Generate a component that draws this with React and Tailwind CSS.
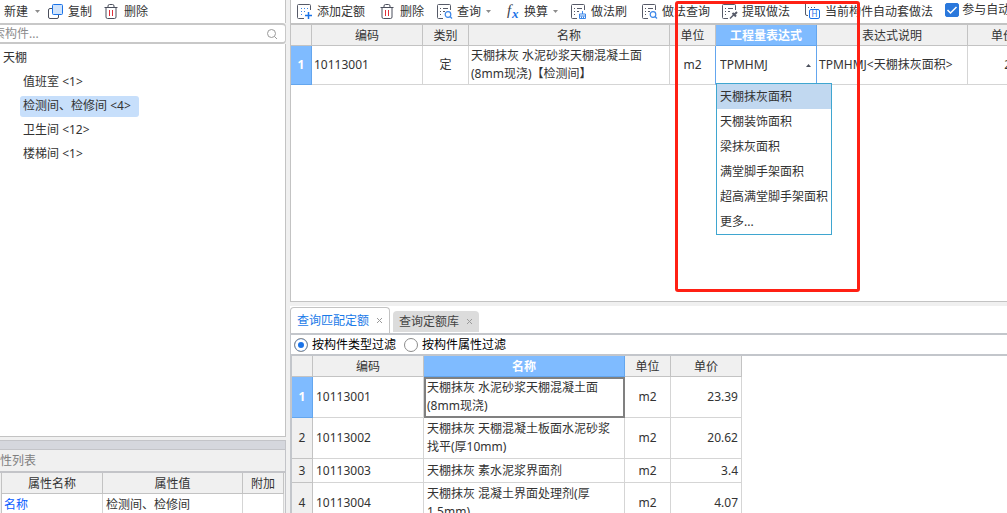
import React, { useState } from "react";

const members = [
  { name: "值班室", count: 1 },
  { name: "检测间、检修间", count: 4 },
  { name: "卫生间", count: 12 },
  { name: "楼梯间", count: 1 },
];

const expressions = [
  "天棚抹灰面积",
  "天棚装饰面积",
  "梁抹灰面积",
  "满堂脚手架面积",
  "超高满堂脚手架面积",
  "更多...",
];

const quotas = [
  { code: "10113001", name: "天棚抹灰 水泥砂浆天棚混凝土面\n(8mm现浇)", unit: "m2", price: "23.39" },
  { code: "10113002", name: "天棚抹灰 天棚混凝土板面水泥砂浆\n找平(厚10mm)", unit: "m2", price: "20.62" },
  { code: "10113003", name: "天棚抹灰 素水泥浆界面剂", unit: "m2", price: "3.4" },
  { code: "10113004", name: "天棚抹灰 混凝土界面处理剂(厚\n1.5mm)", unit: "m2", price: "4.07" },
];

function CopyIcon() {
  return (
    <svg className="w-4 h-4 shrink-0" viewBox="0 0 16 16" fill="none">
      <path d="M4 4.500H2A1.500 1.500 0 0 0 .5 6v7A1.500 1.500 0 0 0 2 14.500h7a1.500 1.500 0 0 0 1.500-1.500v-2" stroke="#4b4f5c" />
      <rect x="4.500" y=".5" width="10" height="10" rx="1" fill="#cfe3fc" stroke="#1a73e8" />
    </svg>
  );
}

function TrashIcon() {
  return (
    <svg className="w-4 h-4 shrink-0" viewBox="0 0 16 16" fill="none">
      <path d="M.5 3.500h13M4 3.500V2A1.500 1.500 0 0 1 5.500.5h3A1.500 1.500 0 0 1 10 2v1.500M2 3.500V13a1.500 1.500 0 0 0 1.500 1.500h7A1.500 1.500 0 0 0 12 13V3.500" stroke="#4b4f5c" />
      <path d="M5.500 6v6M8.500 6v6" stroke="#e0303a" />
    </svg>
  );
}

// sheet outline shared by the quota icons, the badge is drawn in its lower right corner
function SheetIcon({ children }) {
  return (
    <svg className="w-4 h-4 shrink-0" viewBox="0 0 16 16" fill="none">
      <path d="M13.500 6V1.500a1 1 0 0 0-1-1h-11a1 1 0 0 0-1 1v12a1 1 0 0 0 1 1H6" stroke="#565a68" />
      <path d="M3 4.500h1M3 7.500h1M3 10.500h1M6 4.500h5M6 7.500h2" stroke="#565a68" />
      {children}
    </svg>
  );
}

function AddIcon() {
  return (
    <svg className="w-4 h-4 shrink-0" viewBox="0 0 16 16" fill="none">
      <path d="M13.500 6V1.500a1 1 0 0 0-1-1h-11a1 1 0 0 0-1 1v12a1 1 0 0 0 1 1H7" stroke="#565a68" />
      <path d="M4 4.500h1M7 4.500h1M10 4.500h1M4 7.500h1M7 7.500h1M4 10.500h1" stroke="#3b86e8" />
      <path d="M11.500 8v7M8 11.500h7" stroke="#1a73e8" strokeWidth="1.500" />
    </svg>
  );
}

function SearchBadge() {
  return (
    <>
      <circle cx="11" cy="10.500" r="2.800" stroke="#3b86e8" strokeWidth="1.200" />
      <path d="M13 12.500l2 2" stroke="#3b86e8" strokeWidth="1.200" />
    </>
  );
}

function BrushBadge() {
  return (
    <path d="M11.500 7v3M8.500 10h6v2h-6zM8.500 12v2.500h6V12M10.500 12.500v2M12.500 12.500v2" stroke="#3b86e8" />
  );
}

function PickBadge() {
  return (
    <>
      <path d="M8 14.500l4-4" stroke="#565a68" strokeWidth="1.500" />
      <path d="M10.500 9l3.500 3.500M12.500 10.500l2.500-2.500" stroke="#565a68" strokeWidth="2" />
    </>
  );
}

function AutoIcon() {
  return (
    <svg className="w-4 h-4 shrink-0" viewBox="0 0 16 16" fill="none">
      <path d="M.5 0v10A1.500 1.500 0 0 0 2 11.500h1M3 3.500h1M6 3.500h1M9 3.500h1" stroke="#565a68" />
      <rect x="4.500" y="5.500" width="10" height="9" rx="1.500" fill="#fff" stroke="#1a73e8" />
      <text x="9.500" y="13" fontSize="8" textAnchor="middle" fill="#1a73e8">H</text>
    </svg>
  );
}

function FxIcon() {
  return (
    <svg className="w-4 h-4 shrink-0 overflow-visible" viewBox="0 0 16 16">
      <text x="3" y="11" fontSize="15" className="font-['Liberation_Serif',serif] italic" fill="#3b3f4c">f</text>
      <text x="8" y="14" fontSize="13" className="font-['Liberation_Serif',serif] italic font-bold" fill="#1a73e8">x</text>
    </svg>
  );
}

function ToolButton({ icon, label, arrow, className }) {
  return (
    <button type="button" className={"flex items-center gap-1 shrink-0 whitespace-nowrap " + (className || "mr-3")}>
      {icon}
      {label}
      {arrow && <Arrow />}
    </button>
  );
}

function Arrow() {
  return (
    <svg className="w-[7px] h-1 shrink-0" viewBox="0 0 7 4">
      <path d="M1 0h5L3.500 3z" fill="#8c8c8c" />
    </svg>
  );
}

function Th({ active, children }) {
  return (
    <th
      className={
        "h-[21px] pt-[2px] px-0 pb-0 border-r border-b text-center " +
        (active
          ? "bg-[#7fbbff] border-[#64a6ee] text-white font-bold"
          : "bg-[#f0f0f0] border-[#c3c3c3] font-normal")
      }
    >
      {children}
    </th>
  );
}

function RowHead({ active, children }) {
  return (
    <th
      className={
        "p-0 border-r border-b text-center " +
        (active
          ? "bg-[#7fbbff] border-[#64a6ee] text-white font-bold"
          : "bg-[#f0f0f0] border-[#c3c3c3] font-normal")
      }
    >
      {children}
    </th>
  );
}

function MemberPanel() {
  const [selected, setSelected] = useState(1);

  return (
    <div className="flex flex-col flex-1 min-h-0">
      <div className="flex items-center h-[23px] pl-1 bg-white border-r border-[#c3c3c3]">
        <button type="button" className="flex items-center gap-[6px] mr-[7px]">
          新建
          <Arrow />
        </button>
        <ToolButton icon={<CopyIcon />} label="复制" />
        <ToolButton icon={<TrashIcon />} label="删除" />
      </div>
      <div className="flex items-center h-[21px] -ml-6 pl-[5px] pr-[7px] bg-white border-y-2 border-r border-[#c8c8c8] rounded-r">
        <input
          type="text"
          aria-label="搜索构件"
          placeholder="搜索构件..."
          className="flex-1 min-w-0 outline-none placeholder:text-[#8c8c8c]"
        />
        <svg className="w-3 h-3" viewBox="0 0 12 12" fill="none" stroke="#9a9a9a">
          <circle cx="5.500" cy="5.500" r="4" />
          <path d="M8.500 8.500l2.500 2.500" />
        </svg>
      </div>
      <div className="flex-1 min-h-0 pt-[2px] bg-white border-r border-b border-[#c3c3c3]">
        <div className="flex items-center h-6 pl-[3px]">天棚</div>
        <ul className="pl-5">
          {members.map((m, i) => (
            <li key={m.name} className="flex items-center h-6">
              <button
                type="button"
                onClick={() => setSelected(i)}
                className={"h-[21px] pl-[3px] pr-2 rounded-[3px] " + (i === selected ? "bg-[#c7dffb]" : "")}
              >
                {m.name} &lt;{m.count}&gt;
              </button>
            </li>
          ))}
        </ul>
      </div>
    </div>
  );
}

function PropertyPanel() {
  return (
    <div className="h-[73px] shrink-0 mt-[3px] overflow-hidden">
      <div className="h-[10px] bg-[#d5d7dd] border border-l-0 border-[#c3c4c8]"></div>
      <div className="flex items-center h-[21px] -ml-3 text-[#808080] border-r border-[#c3c4c8]">属性列表</div>
      <div className="pl-[1px] pr-[1px] border-t-2 border-r border-[#c3c4c8]">
        <table className="table-fixed w-full border-separate border-spacing-0 border-l border-[#c3c3c3]">
          <colgroup>
            <col className="w-[101px]" />
            <col />
            <col className="w-[41px]" />
          </colgroup>
          <thead>
            <tr>
              <Th>属性名称</Th>
              <Th>属性值</Th>
              <Th>附加</Th>
            </tr>
          </thead>
          <tbody className="bg-white">
            <tr>
              <td className="h-[22px] py-0 px-[2px] border-r border-b border-[#d5d5d5] text-[#0a5cff]">名称</td>
              <td className="py-0 px-[3px] border-r border-b border-[#d5d5d5]">检测间、检修间</td>
              <td className="border-r border-b border-[#d5d5d5] p-0"></td>
            </tr>
          </tbody>
        </table>
      </div>
    </div>
  );
}

function ExpressionCell() {
  const [value, setValue] = useState("TPMHMJ");
  const [picked, setPicked] = useState(0);

  return (
    <td className="relative p-0 border-r border-b border-[#64a6ee] border-b-[#d5d5d5]">
      <div className="flex items-center pl-1 pr-[5px]">
        <input
          type="text"
          aria-label="工程量表达式"
          value={value}
          onChange={(e) => setValue(e.target.value)}
          className="flex-1 min-w-0 outline-none"
        />
        <button type="button" aria-label="展开">
          <svg className="w-[5px] h-[3px]" viewBox="0 0 5 3">
            <path d="M0 3h5L2.500 0z" fill="#4b4f5c" />
          </svg>
        </button>
      </div>
      <ul role="listbox" className="absolute z-10 left-0 top-[37px] w-[116px] bg-white border border-[#3fa6d0]">
        {expressions.map((text, i) => (
          <li
            key={text}
            role="option"
            aria-selected={i === picked}
            onClick={() => setPicked(i)}
            className={"flex items-center h-[25px] pl-[3px] whitespace-nowrap " + (i === picked ? "bg-[#c1d8f0]" : "")}
          >
            {text}
          </li>
        ))}
      </ul>
    </td>
  );
}

function QuotaPanel() {
  return (
    <div className="relative flex flex-col flex-1 min-h-0 overflow-hidden bg-white border-l border-b border-[#c3c3c3]">
      <div className="flex items-center h-[23px] shrink-0 pl-[6px]">
        <ToolButton className="mr-[15px]" icon={<AddIcon />} label="添加定额" />
        <ToolButton className="mr-[13px]" icon={<TrashIcon />} label="删除" />
        <ToolButton icon={<SheetIcon><SearchBadge /></SheetIcon>} label="查询" arrow />
        <ToolButton icon={<FxIcon />} label="换算" arrow />
        <ToolButton className="mr-[15px]" icon={<SheetIcon><BrushBadge /></SheetIcon>} label="做法刷" />
        <ToolButton icon={<SheetIcon><SearchBadge /></SheetIcon>} label="做法查询" />
        <ToolButton className="mr-[15px]" icon={<SheetIcon><PickBadge /></SheetIcon>} label="提取做法" />
        <ToolButton icon={<AutoIcon />} label="当前构件自动套做法" />
        <label className="flex items-center gap-[3px] pb-1 shrink-0 whitespace-nowrap">
          <span className="grid">
            <input
              type="checkbox"
              defaultChecked
              className="peer col-start-1 row-start-1 appearance-none w-[14px] h-[14px] rounded-[2px] border border-[#2a78dc] checked:bg-[#2a78dc]"
            />
            <svg
              className="col-start-1 row-start-1 w-[14px] h-[14px] pointer-events-none invisible peer-checked:visible"
              viewBox="0 0 14 14"
              fill="none"
              stroke="#fff"
              strokeWidth="1.500"
            >
              <path d="M2.500 7l3 3 6-6" />
            </svg>
          </span>
          参与自动套
        </label>
      </div>
      <div className="border-t-2 border-[#c3c3c3]">
        <table className="table-fixed w-[748px] border-separate border-spacing-0">
          <colgroup>
            <col className="w-[21px]" />
            <col className="w-[111px]" />
            <col className="w-[46px]" />
            <col className="w-[201px]" />
            <col className="w-[46px]" />
            <col className="w-[101px]" />
            <col className="w-[151px]" />
            <col className="w-[71px]" />
          </colgroup>
          <thead>
            <tr>
              <Th />
              <Th>编码</Th>
              <Th>类别</Th>
              <Th>名称</Th>
              <Th>单位</Th>
              <Th active>工程量表达式</Th>
              <Th>表达式说明</Th>
              <Th>单价</Th>
            </tr>
          </thead>
          <tbody>
            <tr>
              <RowHead active>1</RowHead>
              <td className="h-[39px] py-0 px-[2px] border-r border-b border-[#d5d5d5]">10113001</td>
              <td className="p-0 border-r border-b border-[#d5d5d5] text-center">定</td>
              <td className="py-0 px-[2px] border-r border-b border-[#d5d5d5] whitespace-pre">
                {"天棚抹灰 水泥砂浆天棚混凝土面\n(8mm现浇)【检测间】"}
              </td>
              <td className="p-0 border-r border-b border-[#d5d5d5] border-r-[#64a6ee] text-center">m2</td>
              <ExpressionCell />
              <td className="py-0 px-[2px] border-r border-b border-[#d5d5d5] whitespace-nowrap">
                TPMHMJ&lt;天棚抹灰面积&gt;
              </td>
              <td className="py-0 px-[3px] border-r border-b border-[#d5d5d5] text-right">23.39</td>
            </tr>
          </tbody>
        </table>
      </div>
      <div className="absolute z-20 left-[384px] top-[1px] w-[185px] h-[291px] border-[3px] border-[#ff2014] rounded-[3px] pointer-events-none"></div>
    </div>
  );
}

function LookupPanel() {
  const [current, setCurrent] = useState(0);

  return (
    <div className="flex flex-col h-[207px] shrink-0 overflow-hidden bg-white">
      <div role="tablist" className="flex items-end h-[27px] shrink-0 pt-[1px]">
        <div className="flex items-center gap-[7px] h-[26px] px-[6px] mr-[3px] bg-white border border-b-0 border-[#c3c3c3] rounded-t">
          <button type="button" role="tab" aria-selected="true" className="text-[#1a7ae8]">查询匹配定额</button>
          <CloseButton />
        </div>
        <div className="flex items-center gap-[7px] h-[21px] mb-[1px] px-[6px] bg-[#dcdcdc] rounded-t">
          <button type="button" role="tab" aria-selected="false" className="text-[#444]">查询定额库</button>
          <CloseButton />
        </div>
      </div>
      <div className="flex items-center gap-2 h-[23px] shrink-0 pl-[3px] border-y-2 border-l border-[#c3c6cb] text-black">
        {["按构件类型过滤", "按构件属性过滤"].map((text, i) => (
          <label key={text} className="flex items-center gap-1">
            <input
              type="radio"
              name="filter"
              checked={i === current}
              onChange={() => setCurrent(i)}
              className="appearance-none w-[14px] h-[14px] rounded-full border border-[#8c8c8c] bg-white checked:bg-[#1a73e8] checked:shadow-[inset_0_0_0_3px_#fff]"
            />
            {text}
          </label>
        ))}
      </div>
      <div className="border-l-2 border-[#c3c6cb]">
        <table className="table-fixed w-[450px] border-separate border-spacing-0">
          <colgroup>
            <col className="w-[21px]" />
            <col className="w-[111px]" />
            <col className="w-[201px]" />
            <col className="w-[46px]" />
            <col className="w-[71px]" />
          </colgroup>
          <thead>
            <tr>
              <Th />
              <Th>编码</Th>
              <Th active>名称</Th>
              <Th>单位</Th>
              <Th>单价</Th>
            </tr>
          </thead>
          <tbody>
            {quotas.map((q, i) => (
              <tr key={q.code}>
                <RowHead active={i === 0}>{i + 1}</RowHead>
                <td className="h-6 py-0 px-[3px] border-r border-b border-[#d5d5d5]">{q.code}</td>
                <td
                  className={
                    "whitespace-pre " +
                    (i === 0
                      ? "pt-0 pb-[1px] pl-[1px] pr-0 border-2 border-[#808080]"
                      : "py-[2px] px-[3px] border-r border-b border-[#d5d5d5]")
                  }
                >
                  {q.name}
                </td>
                <td className="p-0 border-r border-b border-[#d5d5d5] text-center">{q.unit}</td>
                <td className="py-0 px-[3px] border-r border-b border-[#d5d5d5] text-right">{q.price}</td>
              </tr>
            ))}
          </tbody>
        </table>
      </div>
    </div>
  );
}

function CloseButton() {
  return (
    <button type="button" aria-label="关闭">
      <svg className="w-[7px] h-[7px]" viewBox="0 0 7 7" stroke="#9a9a9a">
        <path d="M1 1l5 5M6 1l-5 5" />
      </svg>
    </button>
  );
}

export default function App() {
  return (
    <div className="flex gap-1 h-screen overflow-hidden bg-[#f0f0f0] text-[#333] text-[12px] leading-[18px] font-['Noto_Sans','Noto_Sans_CJK_SC',sans-serif]">
      <aside className="flex flex-col w-[286px] shrink-0 overflow-hidden">
        <MemberPanel />
        <PropertyPanel />
      </aside>
      <main className="flex flex-col flex-1 min-w-0 gap-1">
        <QuotaPanel />
        <LookupPanel />
      </main>
    </div>
  );
}
